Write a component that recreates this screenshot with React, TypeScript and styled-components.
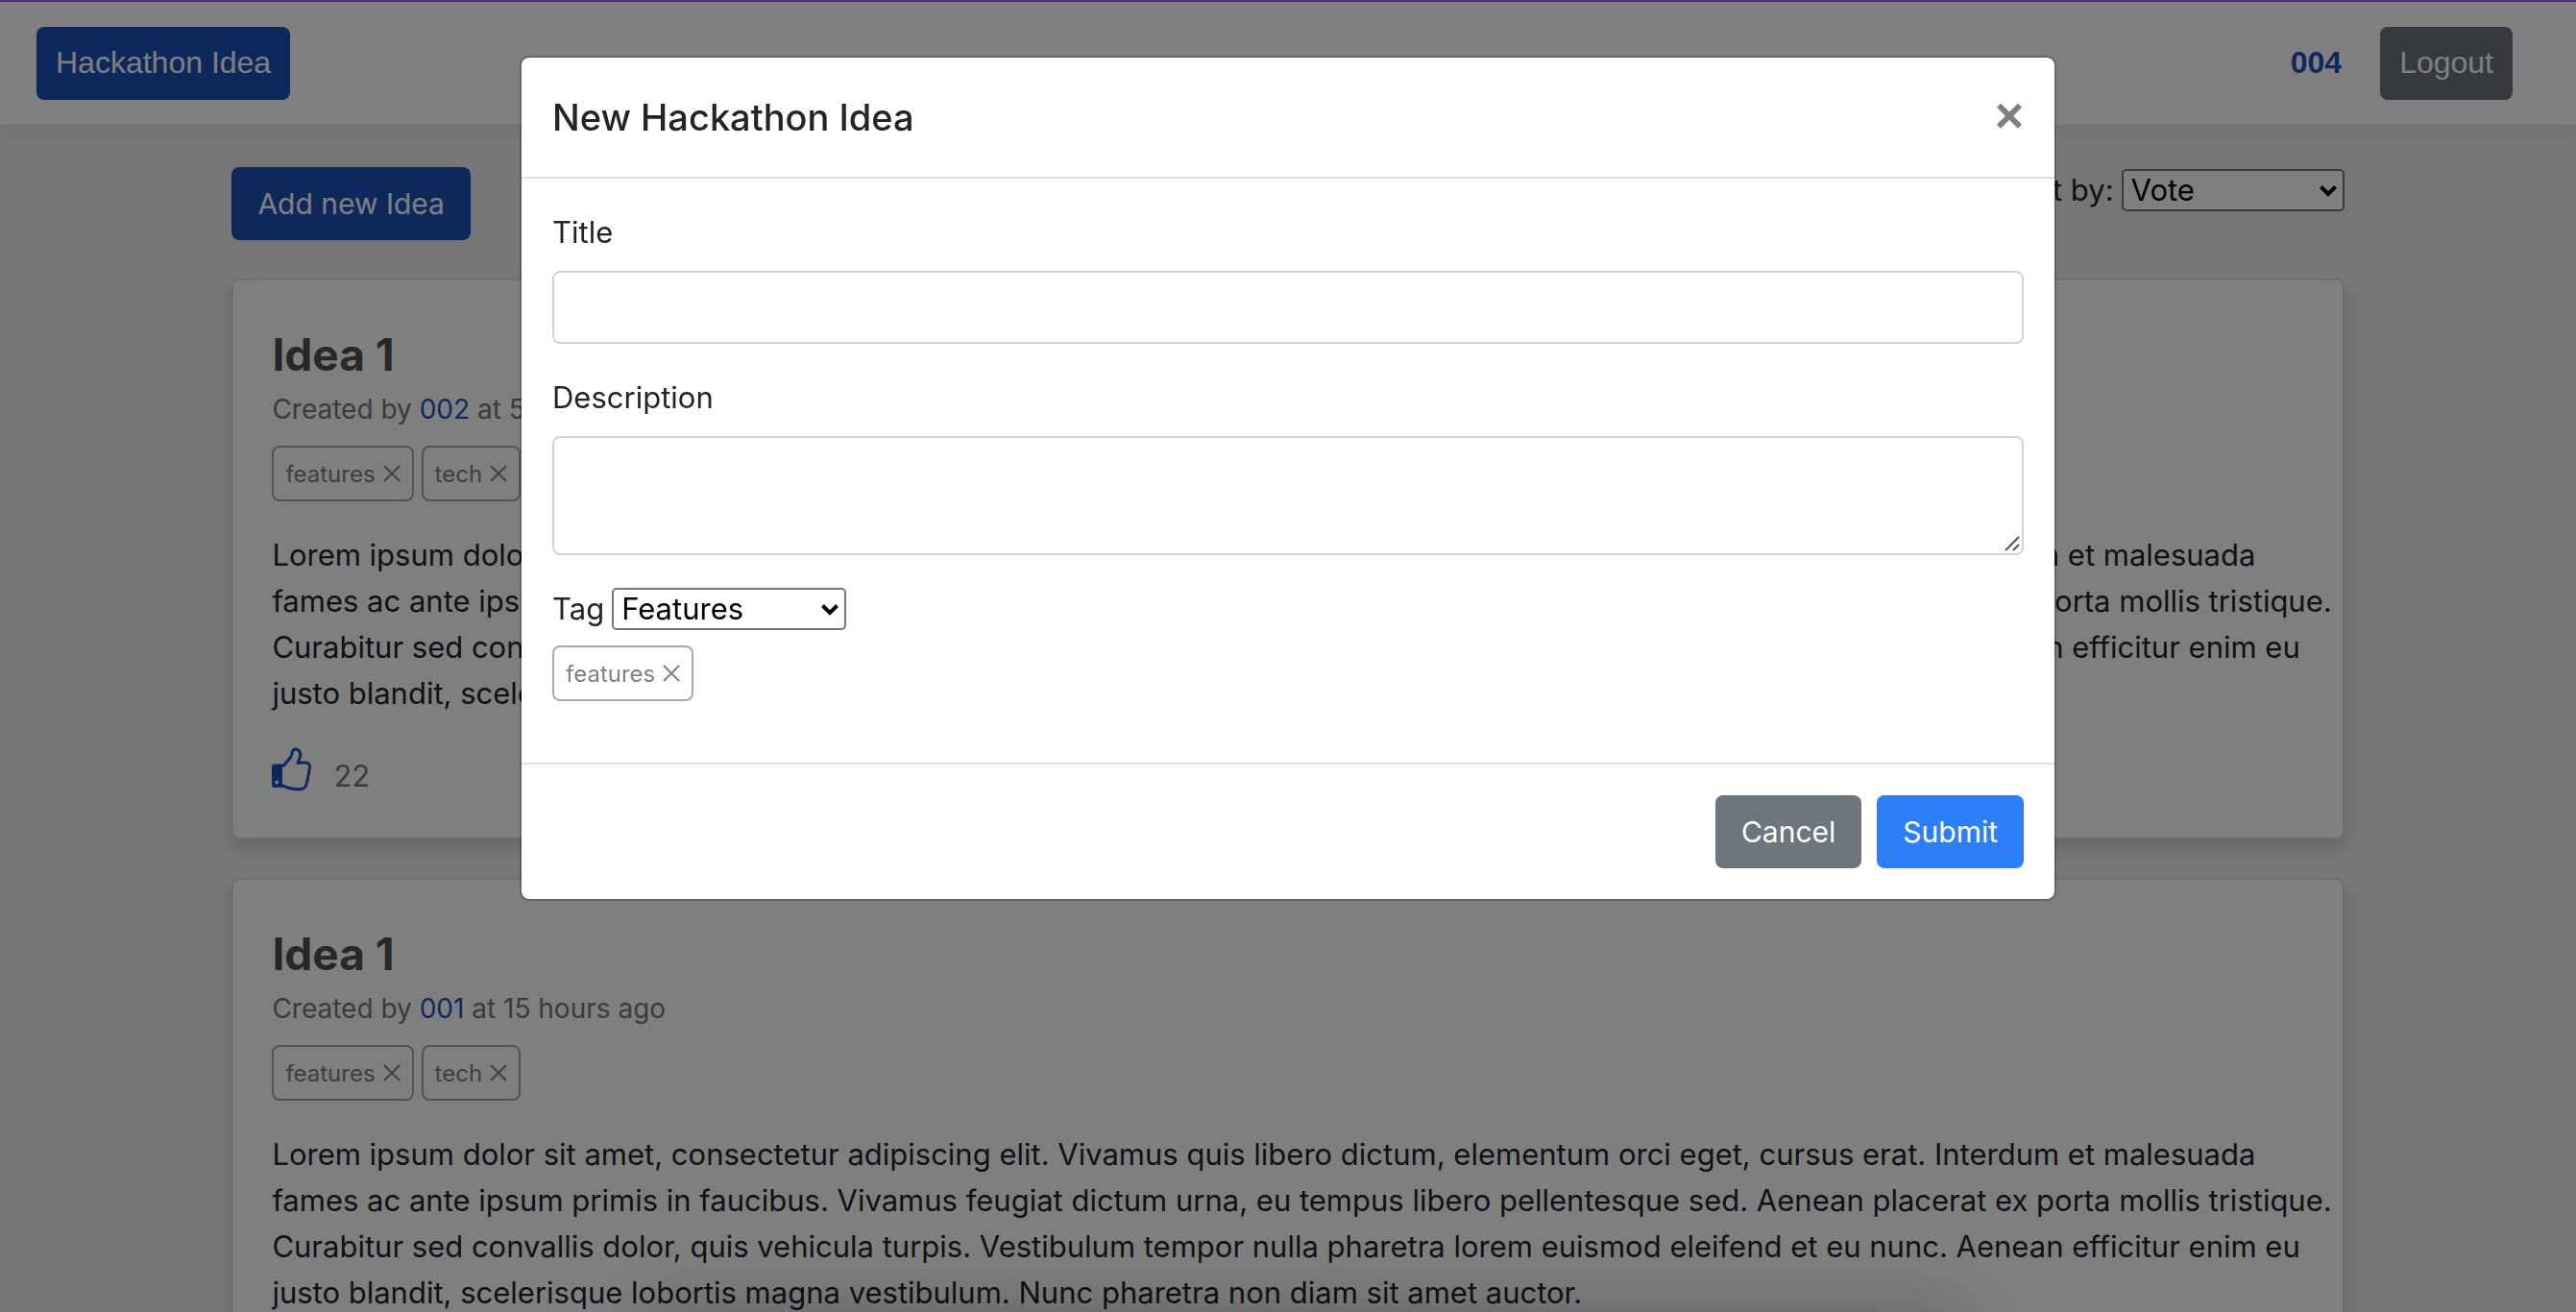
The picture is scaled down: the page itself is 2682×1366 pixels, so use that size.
import React from "react";
import styled, { createGlobalStyle, css } from "styled-components";

const sans = `Inter, "Liberation Sans", sans-serif`;
const helv = `"Liberation Sans", Arial, sans-serif`;

const GlobalStyle = createGlobalStyle`
  *, *::before, *::after { box-sizing: border-box; }
  html { height: 100%; overflow: hidden; }
  body {
    margin: 0;
    min-height: 100%;
    background: #ededed;
    color: #212529;
    font-family: ${sans};
    font-size: 31px;
    line-height: 48px;
  }
  a { color: #1b53b9; text-decoration: none; }
  h1, h2, p { margin: 0; }
`;

const Navbar = styled.nav`
  position: relative;
  display: flex;
  align-items: center;
  gap: 40px;
  padding: 26px 66px 26px 38px;
  background: #fff;
  border-top: 2px solid #925fdd;
  box-shadow: 0 4px 16px rgba(0, 0, 0, 0.06);
`;

const Button = styled.button<{ $tone?: "brand" | "primary" | "muted" }>`
  height: 76px;
  padding: 0 27px;
  border: 0;
  border-radius: 8px;
  color: #fff;
  background: ${({ $tone }) =>
    $tone === "muted" ? "#6d757d" : $tone === "primary" ? "#2d7ff9" : "#1b53b9"};
  font-family: inherit;
  font-size: 30px;
`;

const NavButton = styled(Button)`
  padding: 0 20px 2px;
  font-family: ${helv};
  font-size: 32px;
`;

const UserLink = styled.a`
  margin-left: auto;
  padding-bottom: 2px;
  font-family: ${helv};
  font-size: 32px;
  font-weight: 700;
`;

const Container = styled.main`
  width: 82%;
  margin: 0 auto;
  padding-top: 44px;
`;

const Toolbar = styled.div`
  display: flex;
  justify-content: space-between;
  align-items: flex-start;
  margin-bottom: 40px;
`;

const Field = styled.label`
  display: flex;
  align-items: center;
  gap: 8px;
`;

const SelectBox = styled.span`
  position: relative;
  display: inline-flex;
`;

const Select = styled.select<{ $wide?: boolean }>`
  appearance: none;
  width: ${({ $wide }) => ($wide ? 244 : 232)}px;
  height: 44px;
  padding: 0 8px;
  border: 2px solid #767676;
  border-radius: 5px;
  background: #fff;
  color: #000;
  font: inherit;
  line-height: 40px;
`;

const Chevron = styled.svg`
  position: absolute;
  right: 8px;
  top: 16px;
  width: 18px;
  height: 14px;
  pointer-events: none;
`;

const Card = styled.article`
  margin-bottom: 40px;
  padding: 40px 4px 40px 40px;
  background: #fff;
  border: 2px solid #dfdfdf;
  border-radius: 8px;
  box-shadow: 0 8px 16px rgba(0, 0, 0, 0.14);
`;

const IdeaTitle = styled.h2`
  margin-top: 8px;
  color: #505050;
  font-size: 46px;
  line-height: 58px;
  font-weight: 700;
`;

const Meta = styled.p`
  margin: 6px 0 16px;
  color: #777;
  font-size: 28px;
  line-height: 44px;
`;

const Tags = styled.div`
  display: flex;
  gap: 8px;
`;

const Tag = styled.button`
  display: flex;
  align-items: center;
  gap: 8px;
  height: 58px;
  padding: 0 12px;
  border: 2px solid #a9a9a9;
  border-radius: 8px;
  background: transparent;
  color: #808080;
  font-family: inherit;
  font-size: 24px;
  svg { width: 18px; height: 18px; }
`;

const Body = styled.p`
  margin-top: 32px;
`;

const Votes = styled.div`
  display: flex;
  align-items: flex-end;
  gap: 22px;
  height: 58px;
  margin-top: 28px;
  color: #777;
`;

const VoteButton = styled.button`
  padding: 0 0 8px;
  border: 0;
  background: none;
  color: #1b53b9;
  svg { display: block; width: 42px; height: 46px; }
`;

const Backdrop = styled.div`
  position: fixed;
  inset: 0;
  display: flex;
  justify-content: center;
  align-items: flex-start;
  padding-top: 58px;
  overflow: hidden;
  background: rgba(0, 0, 0, 0.5);

  &::after {
    content: "";
    position: absolute;
    top: 100%;
    left: 25%;
    width: 51%;
    height: 80px;
    box-shadow: 0 8px 80px rgba(0, 0, 0, 0.3);
  }
`;

const Dialog = styled.form`
  width: 1600px;
  max-width: 100%;
  background: #fff;
  background-clip: padding-box;
  border: 2px solid rgba(0, 0, 0, 0.2);
  border-radius: 10px;
`;

const DialogHeader = styled.header`
  display: flex;
  justify-content: space-between;
  align-items: center;
  height: 126px;
  padding: 0 32px;
  border-bottom: 2px solid #dee2e6;
`;

const DialogTitle = styled.h1`
  font-size: 38px;
  line-height: 60px;
  font-weight: 500;
`;

const Close = styled.button`
  padding: 0 0 4px;
  border: 0;
  background: none;
  color: #7f7f7f;
  font: 700 52px/48px ${helv};
`;

const DialogBody = styled.div`
  padding: 32px;
`;

const Group = styled.div`
  display: flex;
  flex-direction: column;
  gap: 16px;
  margin-bottom: 32px;
`;

const inputLook = css`
  display: block;
  width: 100%;
  border: 2px solid #ced4da;
  border-radius: 8px;
  background: #fff;
  padding: 12px 24px;
  font: inherit;
`;

const Input = styled.input`
  ${inputLook}
  height: 76px;
`;

const TextAreaBox = styled.div`
  position: relative;
`;

const TextArea = styled.textarea`
  ${inputLook}
  height: 124px;
  resize: vertical;
  &::-webkit-resizer { display: none; }
`;

const Grip = styled.svg`
  position: absolute;
  right: 4px;
  bottom: 4px;
  width: 16px;
  height: 16px;
  pointer-events: none;
`;

const TagPicker = styled.div`
  display: flex;
  flex-direction: column;
  gap: 14px;
  padding-bottom: 32px;
`;

const DialogFooter = styled.footer`
  display: flex;
  justify-content: flex-end;
  gap: 16px;
  padding: 32px;
  border-top: 2px solid #dee2e6;
`;

const lorem =
  "Lorem ipsum dolor sit amet, consectetur adipiscing elit. Vivamus quis libero dictum, elementum orci eget, cursus erat. Interdum et malesuada fames ac ante ipsum primis in faucibus. Vivamus feugiat dictum urna, eu tempus libero pellentesque sed. Aenean placerat ex porta mollis tristique. Curabitur sed convallis dolor, quis vehicula turpis. Vestibulum tempor nulla pharetra lorem euismod eleifend et eu nunc. Aenean efficitur enim eu justo blandit, scelerisque lobortis magna vestibulum. Nunc pharetra non diam sit amet auctor.";

const ideas = [
  { id: 1, title: "Idea 1", author: "002", time: "51 minutes ago", tags: ["features", "tech"], votes: 22 },
  { id: 2, title: "Idea 1", author: "001", time: "15 hours ago", tags: ["features", "tech"], votes: 12 },
];

function Dropdown({ id, options, wide }: { id: string; options: string[]; wide?: boolean }) {
  return (
    <SelectBox>
      <Select id={id} $wide={wide}>
        {options.map((o) => (
          <option key={o}>{o}</option>
        ))}
      </Select>
      <Chevron viewBox="0 0 18 14" fill="none" stroke="#000" strokeWidth="4">
        <path d="M1.5 2.5 9 10l7.5-7.5" />
      </Chevron>
    </SelectBox>
  );
}

function TagChip({ name }: { name: string }) {
  return (
    <Tag type="button">
      {name}
      <svg viewBox="0 0 18 18" stroke="currentColor" strokeWidth="2" aria-hidden="true">
        <path d="M1 1 17 17M17 1 1 17" />
      </svg>
    </Tag>
  );
}

function ThumbUp() {
  return (
    <svg viewBox="0 0 42 46" fill="none" aria-hidden="true">
      <path
        d="M9 19h3.500l7-8.500C21.500 8 20.500 2 24 2c4.500 0 6.500 3.500 5.500 8L27 16.500c2-.8 5-.5 8-.5 3.500 0 5 2.500 4.500 5.500l-1 4.500.2 1.500-1.200 3.500.2 1.500-1.200 3.500c-.3 4-1.500 6-4 7-4 1.200-9 .8-13-.2-4-1-6-2.300-10.500-3.300"
        stroke="currentColor"
        strokeWidth="3"
        strokeLinejoin="round"
      />
      <path
        fillRule="evenodd"
        fill="currentColor"
        d="M3 17.500h8V42H3c-2 0-3-1-3-3V20.500c0-2 1-3 3-3Zm2.200 17a1.900 1.900 0 1 0 0 3.800 1.900 1.900 0 0 0 0-3.800Z"
      />
    </svg>
  );
}

export default function App() {
  return (
    <>
      <GlobalStyle />
      <Navbar>
        <NavButton>Hackathon Idea</NavButton>
        <UserLink href="#user">004</UserLink>
        <NavButton $tone="muted">Logout</NavButton>
      </Navbar>
      <Container>
        <Toolbar>
          <Button>Add new Idea</Button>
          <Field htmlFor="sort">
            Sort by:
            <Dropdown id="sort" options={["Vote", "Created date"]} />
          </Field>
        </Toolbar>
        {ideas.map((idea) => (
          <Card key={idea.id}>
            <IdeaTitle>{idea.title}</IdeaTitle>
            <Meta>
              Created by <a href="#author">{idea.author}</a> at {idea.time}
            </Meta>
            <Tags>
              {idea.tags.map((t) => (
                <TagChip key={t} name={t} />
              ))}
            </Tags>
            <Body>{lorem}</Body>
            <Votes>
              <VoteButton aria-label="Vote up">
                <ThumbUp />
              </VoteButton>
              {idea.votes}
            </Votes>
          </Card>
        ))}
      </Container>
      <Backdrop>
        <Dialog role="dialog" aria-labelledby="dialog-title">
          <DialogHeader>
            <DialogTitle id="dialog-title">New Hackathon Idea</DialogTitle>
            <Close type="button" aria-label="Close">×</Close>
          </DialogHeader>
          <DialogBody>
            <Group>
              <label htmlFor="title">Title</label>
              <Input id="title" />
            </Group>
            <Group>
              <label htmlFor="description">Description</label>
              <TextAreaBox>
                <TextArea id="description" />
                <Grip viewBox="0 0 16 16" stroke="#555" strokeWidth="2" aria-hidden="true">
                  <path d="M1 15 15 1M9 15l6-6" />
                </Grip>
              </TextAreaBox>
            </Group>
            <TagPicker>
              <Field htmlFor="tag">
                Tag
                <Dropdown id="tag" wide options={["Features", "Tech"]} />
              </Field>
              <Tags>
                <TagChip name="features" />
              </Tags>
            </TagPicker>
          </DialogBody>
          <DialogFooter>
            <Button type="button" $tone="muted">Cancel</Button>
            <Button type="button" $tone="primary">Submit</Button>
          </DialogFooter>
        </Dialog>
      </Backdrop>
    </>
  );
}
